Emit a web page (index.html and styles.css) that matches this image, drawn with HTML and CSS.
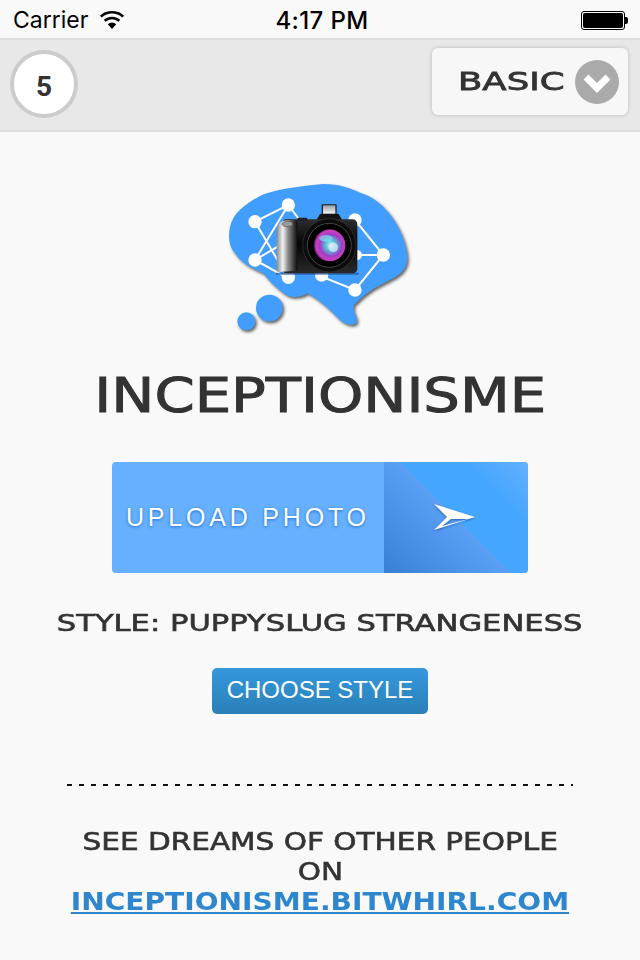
FILE: index.html
```html
<!DOCTYPE html>
<html lang="en">
<head>
    <meta charset="UTF-8">
    <meta name="viewport" content="width=device-width, initial-scale=1.0">
    <title>Inceptionisme</title>
    <link rel="stylesheet" href="styles.css">
</head>
<body>
    <!-- Status bar -->
    <div class="status-bar">
        <div class="status-left">
            <span class="carrier">Carrier</span>
            <svg class="wifi" width="26" height="18" viewBox="0 0 26 18">
                <path d="M13 18 L8.8 13.2 A6.2 6.2 0 0 1 17.2 13.2 Z" fill="#000"/>
                <path d="M5.6 9.8 A11 11 0 0 1 20.4 9.8" fill="none" stroke="#000" stroke-width="2.6"/>
                <path d="M1.8 5.6 A16.6 16.6 0 0 1 24.2 5.6" fill="none" stroke="#000" stroke-width="2.6"/>
            </svg>
        </div>
        <span class="clock">4:17 PM</span>
        <div class="battery"><div class="battery-level"></div></div>
    </div>

    <!-- Toolbar -->
    <div class="toolbar">
        <div class="counter">5</div>
        <div class="mode">
            <span class="wide mode-label">BASIC</span>
            <svg class="mode-arrow" width="44" height="44" viewBox="0 0 44 44">
                <circle cx="22" cy="22" r="22" fill="#aaa"/>
                <path d="M11 17 L22 28 L33 17" fill="none" stroke="#fff" stroke-width="7"/>
            </svg>
        </div>
    </div>

    <div class="main">
        <svg class="logo" width="220" height="170" viewBox="0 0 660 510">
            <defs>
                <linearGradient id="grip" x1="0" x2="1" y1="0" y2="0">
                    <stop offset="0" stop-color="#8a8a8a"/>
                    <stop offset="0.3" stop-color="#f2f2f2"/>
                    <stop offset="0.55" stop-color="#8a8a8a"/>
                    <stop offset="1" stop-color="#0c0c0c"/>
                </linearGradient>
                <linearGradient id="body" x1="0" x2="0" y1="0" y2="1">
                    <stop offset="0" stop-color="#2e2e2e"/>
                    <stop offset="0.45" stop-color="#050505"/>
                    <stop offset="1" stop-color="#2a2a2a"/>
                </linearGradient>
                <linearGradient id="flash" x1="0" x2="0" y1="0" y2="1">
                    <stop offset="0" stop-color="#9aa0a4"/>
                    <stop offset="1" stop-color="#f4f6f8"/>
                </linearGradient>
                <radialGradient id="iris" cx="0.55" cy="0.5" r="0.55">
                    <stop offset="0" stop-color="#e4f2fa"/>
                    <stop offset="0.3" stop-color="#4fc4d8"/>
                    <stop offset="0.62" stop-color="#a03cc8"/>
                    <stop offset="0.85" stop-color="#d040c0"/>
                    <stop offset="1" stop-color="#180a28"/>
                </radialGradient>
            </defs>
            <g class="bubble">
                <path d="M60 170 C70 130 100 105 150 78 C190 60 250 50 340 42 C390 42 420 55 450 68 C490 80 520 105 545 140 C570 175 590 220 592 265 C592 300 565 320 530 335 C500 350 470 365 432 405 C425 425 445 440 440 458 C425 470 400 465 375 435 C350 410 320 385 292 370 C270 385 235 385 215 365 C195 350 180 335 160 310 C125 295 95 280 75 250 C55 225 55 195 60 170 Z" fill="#419dfe"/>
                <circle cx="178" cy="414" r="40" fill="#419dfe"/>
                <circle cx="109" cy="454" r="27" fill="#419dfe"/>
            </g>
            <g stroke="#fff" stroke-width="6" fill="none">
                <path d="M135 155 L235 105 L280 165 M135 155 L235 325 M135 270 L235 105 M135 270 L235 325 M135 270 L220 220"/>
                <path d="M435 150 L520 255 L435 360 L335 320 M520 255 L430 255"/>
            </g>
            <g fill="#fff">
                <circle cx="135" cy="155" r="20"/>
                <circle cx="235" cy="105" r="20"/>
                <circle cx="135" cy="270" r="20"/>
                <circle cx="235" cy="322" r="20"/>
                <circle cx="335" cy="315" r="20"/>
                <circle cx="435" cy="360" r="20"/>
                <circle cx="520" cy="255" r="20"/>
                <circle cx="435" cy="150" r="20"/>
                <circle cx="440" cy="255" r="16"/>
            </g>
            <!-- camera -->
            <path d="M198 308 L446 308 L446 314 L198 314 Z" fill="#1b4f8c" opacity="0.7"/>
            <path d="M318 152 L330 132 L386 132 L398 152 Z" fill="#141414"/>
            <rect x="335" y="103" width="45" height="30" rx="2" fill="#222"/>
            <rect x="339" y="106" width="37" height="25" fill="url(#flash)"/>
            <rect x="215" y="148" width="227" height="162" rx="14" fill="url(#body)"/>
            <path d="M200 180 Q202 152 235 150 L262 152 L262 302 L205 306 Q200 306 200 295 Z" fill="url(#grip)"/>
            <ellipse cx="232" cy="162" rx="16" ry="8" fill="#999" stroke="#555" stroke-width="2"/>
            <rect x="262" y="143" width="30" height="10" rx="4" fill="#222"/>
            <circle cx="358" cy="226" r="80" fill="#0c0c0c" stroke="#3a3a3a" stroke-width="2"/>
            <circle cx="358" cy="226" r="66" fill="#000" stroke="#444" stroke-width="3"/>
            <circle cx="358" cy="226" r="48" fill="url(#iris)"/>
            <ellipse cx="348" cy="205" rx="20" ry="10" fill="#7fe0ee" opacity="0.7"/>
            <circle cx="370" cy="232" r="14" fill="#dceaf4" opacity="0.75"/>
        </svg>

        <h1 class="title"><span class="wide">INCEPTIONISME</span></h1>

        <div class="upload">
            <div class="upload-label">UPLOAD PHOTO</div>
            <div class="upload-icon">
                <svg class="plane" width="42" height="27" viewBox="0 0 42 27">
                    <path d="M0 0 L41 13 L0 26 L13 13 Z M17 15 L8 22 L34 15 Z" fill="#fff" fill-rule="evenodd"/>
                </svg>
            </div>
        </div>

        <div class="style-name"><span class="wide">STYLE: PUPPYSLUG STRANGENESS</span></div>

        <div class="choose">CHOOSE STYLE</div>

        <div class="divider"></div>

        <div class="footer-text">
            <div><span class="wide">SEE DREAMS OF OTHER PEOPLE</span></div>
            <div><span class="wide">ON</span></div>
            <div><a class="wide site-link" href="#">INCEPTIONISME.BITWHIRL.COM</a></div>
        </div>
    </div>
</body>
</html>
```
FILE: styles.css
```css
body {
    margin: 0;
    background: #f9f9f9;
    font-family: "Liberation Sans", Arial, sans-serif;
    color: #333;
}

/* Status bar */
.status-bar {
    height: 36px;
    display: grid;
    grid-template-columns: 1fr auto 1fr;
    align-items: center;
    padding: 2px 15px 0 13px;
    color: #000;
    font-family: Inter, sans-serif;
    font-size: 23px;
}

.status-left {
    display: flex;
    align-items: center;
    gap: 11px;
}

.clock {
    margin-left: 6px;
    font-size: 24px;
    font-weight: 500;
    letter-spacing: 0.4px;
}

.battery {
    justify-self: end;
    width: 44px;
    height: 19px;
    box-sizing: border-box;
    border: 1px solid #000;
    border-radius: 3px;
    padding: 1px;
    position: relative;
}

.battery::after {
    content: "";
    position: absolute;
    right: -4px;
    top: 5px;
    width: 3px;
    height: 7px;
    background: #000;
    border-radius: 0 2px 2px 0;
}

.battery-level {
    height: 100%;
    background: #000;
    border-radius: 2px;
}

/* Toolbar */
.toolbar {
    height: 88px;
    display: flex;
    align-items: center;
    justify-content: space-between;
    padding: 0 12px 2px 10px;
    background: #e8e8e8;
    border-top: 2px solid #ddd;
    border-bottom: 2px solid #ddd;
}

.counter {
    width: 68px;
    height: 68px;
    box-sizing: border-box;
    border: 4px solid #ccc;
    border-radius: 50%;
    background: #fff;
    padding-top: 4px;
    display: flex;
    align-items: center;
    justify-content: center;
    font-family: Roboto, sans-serif;
    font-weight: 700;
    font-size: 28px;
}

.mode {
    width: 196px;
    height: 67px;
    margin-bottom: 5px;
    box-sizing: border-box;
    display: flex;
    align-items: center;
    justify-content: space-between;
    padding: 0 9px 0 26px;
    background: #f7f7f7;
    border-radius: 6px;
    box-shadow: 0 0 4px rgba(0, 0, 0, 0.2);
}

/* Wide display lettering */
.wide {
    display: inline-block;
    font-family: "DejaVu Sans", sans-serif;
    white-space: nowrap;
    -webkit-text-stroke: 0.6px currentColor;
}

.mode-label {
    font-size: 25px;
    line-height: 30px;
    transform: scaleX(1.42);
    transform-origin: left center;
    -webkit-text-stroke-width: 0.8px;
}

/* Main column */
.main {
    display: flex;
    flex-direction: column;
    align-items: center;
    padding-top: 38px;
}

.logo {
    display: block;
}

.bubble {
    filter: drop-shadow(5px 6px 5px rgba(0, 0, 0, 0.6));
}

.title {
    margin: 19px 0 0;
    height: 72px;
    line-height: 72px;
    font-size: 48px;
    font-weight: normal;
    text-align: center;
}

.title .wide {
    transform: scaleX(1.2);
    -webkit-text-stroke-width: 1px;
}

.upload {
    margin-top: 31px;
    width: 416px;
    height: 111px;
    display: flex;
    border-radius: 4px;
    overflow: hidden;
    background: #66b0ff;
}

.upload-label {
    width: 272px;
    box-sizing: border-box;
    padding-left: 14px;
    line-height: 111px;
    color: #fff;
    font-size: 25px;
    letter-spacing: 3.8px;
    white-space: nowrap;
    text-shadow: 0 1px 3px #1f6fd0;
}

.upload-icon {
    flex: 1;
    display: flex;
    align-items: center;
    justify-content: center;
    padding-right: 2px;
    background: linear-gradient(45deg, #3a7fd6 0%, #5aa0f5 50%, #45a6ff 50%, #45a6ff 75%, #66b0ff 100%);
}

.plane {
    filter: drop-shadow(0 1px 1px rgba(0, 40, 110, 0.5));
}

.style-name {
    margin-top: 32px;
    height: 36px;
    line-height: 36px;
    font-size: 23px;
    text-align: center;
}

.style-name .wide {
    transform: scaleX(1.33);
}

.choose {
    margin-top: 27px;
    width: 216px;
    height: 46px;
    line-height: 44px;
    text-align: center;
    color: #fff;
    font-size: 24px;
    border-radius: 5px;
    background: linear-gradient(to bottom, #3498db, #2a80b9);
}

.divider {
    margin-top: 70px;
    width: 506px;
    height: 2px;
    background: repeating-linear-gradient(to right, #111 0, #111 5px, transparent 5px, transparent 12px);
}

.footer-text {
    margin-top: 41px;
    font-size: 24px;
    line-height: 30px;
    text-align: center;
}

.footer-text .wide {
    transform: scaleX(1.23);
}

.footer-text .site-link {
    transform: scaleX(1.17);
    color: #2e86cf;
    font-weight: bold;
    text-decoration: underline;
    -webkit-text-stroke-width: 0;
}
```
